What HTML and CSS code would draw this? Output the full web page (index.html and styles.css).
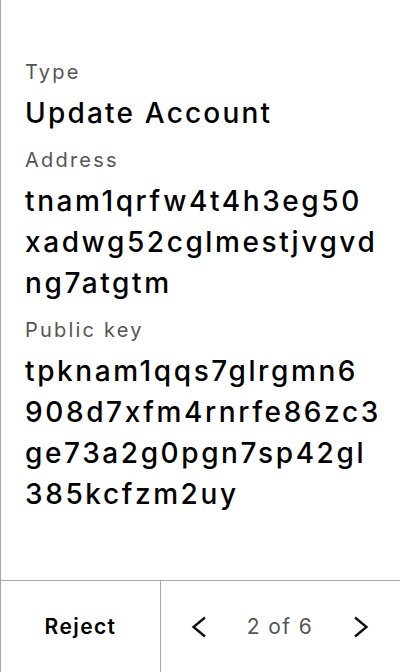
FILE: index.html
```html
<!DOCTYPE html>
<html>
<head>
<meta charset="utf-8">
<link rel="stylesheet" href="styles.css">
</head>
<body>
<div class="screen">
  <div class="content">
    <div class="label first">Type</div>
    <div class="value">Update Account</div>
    <div class="label">Address</div>
    <div class="value hash"><span class="line">tnam1qrfw4t4h3eg50</span><span class="line">xadwg52cglmestjvgvd</span><span class="line">ng7atgtm</span></div>
    <div class="label">Public key</div>
    <div class="value hash"><span class="line">tpknam1qqs7glrgmn6</span><span class="line">908d7xfm4rnrfe86zc3</span><span class="line">ge73a2g0pgn7sp42gl</span><span class="line">385kcfzm2uy</span></div>
  </div>
  <div class="footer">
    <div class="reject">Reject</div>
    <div class="pager">
      <svg class="chev" width="16" height="22" viewBox="0 0 16 22"><path d="M14 1.5 L2.5 11 L14 20.5" fill="none" stroke="#111" stroke-width="2.4" stroke-linejoin="miter"/></svg>
      <span class="count">2 of 6</span>
      <svg class="chev" width="16" height="22" viewBox="0 0 16 22"><path d="M2 1.5 L13.5 11 L2 20.5" fill="none" stroke="#111" stroke-width="2.4" stroke-linejoin="miter"/></svg>
    </div>
  </div>
</div>
</body>
</html>
```
FILE: styles.css
```css
html, body {
  margin: 0;
  padding: 0;
  background: #fff;
}
.screen {
  width: 400px;
  height: 672px;
  box-sizing: border-box;
  border-left: 1px solid #a8a8a8;
  display: flex;
  flex-direction: column;
  font-family: Inter, "Noto Sans", sans-serif;
  color: #000;
}
.content {
  flex: 1;
  padding: 58px 20px 0 24px;
}
.label {
  font-size: 20px;
  line-height: 28px;
  color: #555;
  margin-top: 12px;
  letter-spacing: 2.2px;
}
.label.first {
  margin-top: 0;
}
.value {
  font-size: 28px;
  line-height: 41px;
  margin-top: 7px;
  font-weight: 500;
  letter-spacing: 2.2px;
  word-break: break-all;
}
.value.hash {
  letter-spacing: 2.6px;
}
.line {
  display: block;
  white-space: nowrap;
}
.footer {
  height: 91px;
  border-top: 1px solid #a8a8a8;
  display: flex;
}
.reject {
  width: 159px;
  border-right: 1px solid #a8a8a8;
  display: flex;
  align-items: center;
  justify-content: center;
  font-size: 21px;
  font-weight: 600;
  letter-spacing: 1.4px;
}
.pager {
  flex: 1;
  display: flex;
  align-items: center;
  justify-content: space-between;
  padding: 0 31px 0 30px;
}
.count {
  font-size: 21px;
  color: #555;
  letter-spacing: 1.4px;
}
.chev {
  display: block;
}
```
